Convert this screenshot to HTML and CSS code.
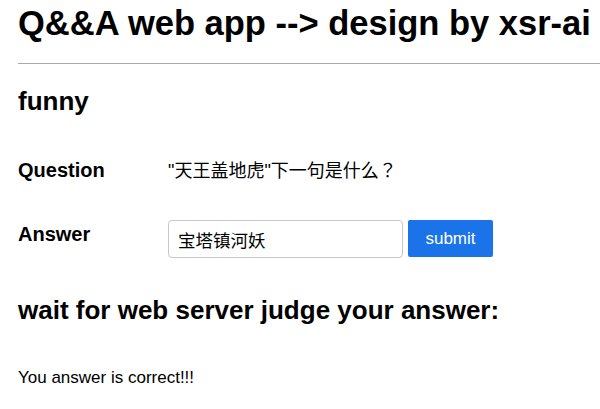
FILE: index.html
```html
<!DOCTYPE html>
<html lang="en">
<head>
<meta charset="utf-8">
<title>Q&&A web app</title>
<link rel="stylesheet" href="styles.css">
</head>
<body>
<div class="page">
  <h1 class="title">Q&amp;&amp;A web app --&gt; design by xsr-ai</h1>
  <hr class="rule">
  <h2 class="topic">funny</h2>
  <form class="qa">
    <div class="row row-question">
      <div class="label">Question</div>
      <div class="question">"天王盖地虎"下一句是什么？</div>
    </div>
    <div class="row row-answer">
      <div class="label answer-label">Answer</div>
      <input class="answer-input" type="text" value="宝塔镇河妖">
      <button class="submit" type="button">submit</button>
    </div>
  </form>
  <h2 class="wait">wait for web server judge your answer:</h2>
  <p class="result">You answer is correct!!!</p>
</div>
</body>
</html>
```
FILE: styles.css
```css
html, body {
  margin: 0;
  padding: 0;
  background: #fff;
}
body {
  font-family: "Liberation Sans", Arial, "Noto Sans CJK JP", sans-serif;
  color: #000;
}
.page {
  padding: 3px 0 0 18px;
}
.title {
  font-size: 34.5px;
  font-weight: bold;
  margin: 0;
  line-height: 40px;
  white-space: nowrap;
}
.rule {
  margin: 20px 0 0 0;
  border: 0;
  border-top: 1px solid #aaa;
  height: 0;
}
.topic {
  font-size: 26px;
  margin: 22px 0 0 0;
  line-height: 30px;
}
.qa {
  margin: 43px 0 0 0;
}
.row {
  display: flex;
}
.row-question {
  align-items: baseline;
  height: 23px;
}
.row-answer {
  align-items: flex-start;
  margin-top: 38px;
}
.label {
  flex: 0 0 150px;
  font-size: 20px;
  font-weight: bold;
  line-height: 23px;
}
.question {
  font-size: 18px;
  line-height: 23px;
  font-family: "Liberation Sans", Arial, "Noto Sans CJK JP", sans-serif;
}
.answer-label {
  padding-top: 3px;
}
.answer-input {
  box-sizing: border-box;
  width: 235px;
  height: 38px;
  margin: 0;
  border: 1px solid #c8c8c8;
  border-radius: 4px;
  padding: 0 9px;
  font-size: 17.5px;
  font-family: "Liberation Sans", Arial, "Noto Sans CJK SC", sans-serif;
  color: #000;
  background: #fff;
}
.submit {
  box-sizing: border-box;
  width: 85px;
  height: 37px;
  margin: 0 0 0 5px;
  border: 0;
  border-radius: 2px;
  background: #1a73e8;
  color: #fff;
  font-size: 17px;
  font-family: "Liberation Sans", Arial, sans-serif;
  padding: 0;
}
.wait {
  font-size: 26px;
  margin: 37px 0 0 0;
  line-height: 30px;
}
.result {
  font-size: 17px;
  margin: 43px 0 0 0;
  line-height: 20px;
}
```
